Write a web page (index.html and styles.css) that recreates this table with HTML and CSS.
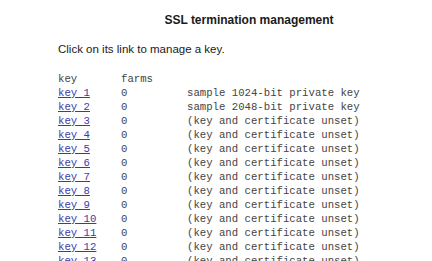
FILE: index.html
```html
<!DOCTYPE html>
<html lang="en">
<head>
    <meta charset="UTF-8">
    <title>SSL termination management</title>
    <link rel="stylesheet" href="styles.css">
</head>
<body>
    <h1 class="title">SSL termination management</h1>
    <p class="intro">Click on its link to manage a key.</p>

    <div class="keys">
        <span class="head">key</span><span class="head">farms</span><span></span>
        <a href="#">key 1</a><span>0</span><span>sample 1024-bit private key</span>
        <a href="#">key 2</a><span>0</span><span>sample 2048-bit private key</span>
        <a href="#">key 3</a><span>0</span><span>(key and certificate unset)</span>
        <a href="#">key 4</a><span>0</span><span>(key and certificate unset)</span>
        <a href="#">key 5</a><span>0</span><span>(key and certificate unset)</span>
        <a href="#">key 6</a><span>0</span><span>(key and certificate unset)</span>
        <a href="#">key 7</a><span>0</span><span>(key and certificate unset)</span>
        <a href="#">key 8</a><span>0</span><span>(key and certificate unset)</span>
        <a href="#">key 9</a><span>0</span><span>(key and certificate unset)</span>
        <a href="#">key 10</a><span>0</span><span>(key and certificate unset)</span>
        <a href="#">key 11</a><span>0</span><span>(key and certificate unset)</span>
        <a href="#">key 12</a><span>0</span><span>(key and certificate unset)</span>
        <a href="#">key 13</a><span>0</span><span>(key and certificate unset)</span>
    </div>
</body>
</html>
```

FILE: styles.css
```css
body {
    margin: 0;
    padding: 0 0 0 58px;
    background-color: #fff;
    color: #1a1a1a;
    font-family: 'Liberation Sans', Arial, sans-serif;
}
.title {
    margin: 0;
    padding: 13px 0 0 8px;
    font-size: 12px;
    line-height: 14px;
    text-align: center;
}
.intro {
    margin: 0;
    padding-top: 15px;
    font-size: 11.5px;
    line-height: 14px;
}
.keys {
    display: grid;
    grid-template-columns: 63px 66px auto;
    grid-auto-rows: 14px;
    margin-top: 16px;
    font-family: 'Liberation Mono', 'Courier New', monospace;
    font-size: 10.67px;
    line-height: 14px;
    color: #444;
    white-space: pre;
}
.keys a {
    color: #3a3aa8;
}
```
